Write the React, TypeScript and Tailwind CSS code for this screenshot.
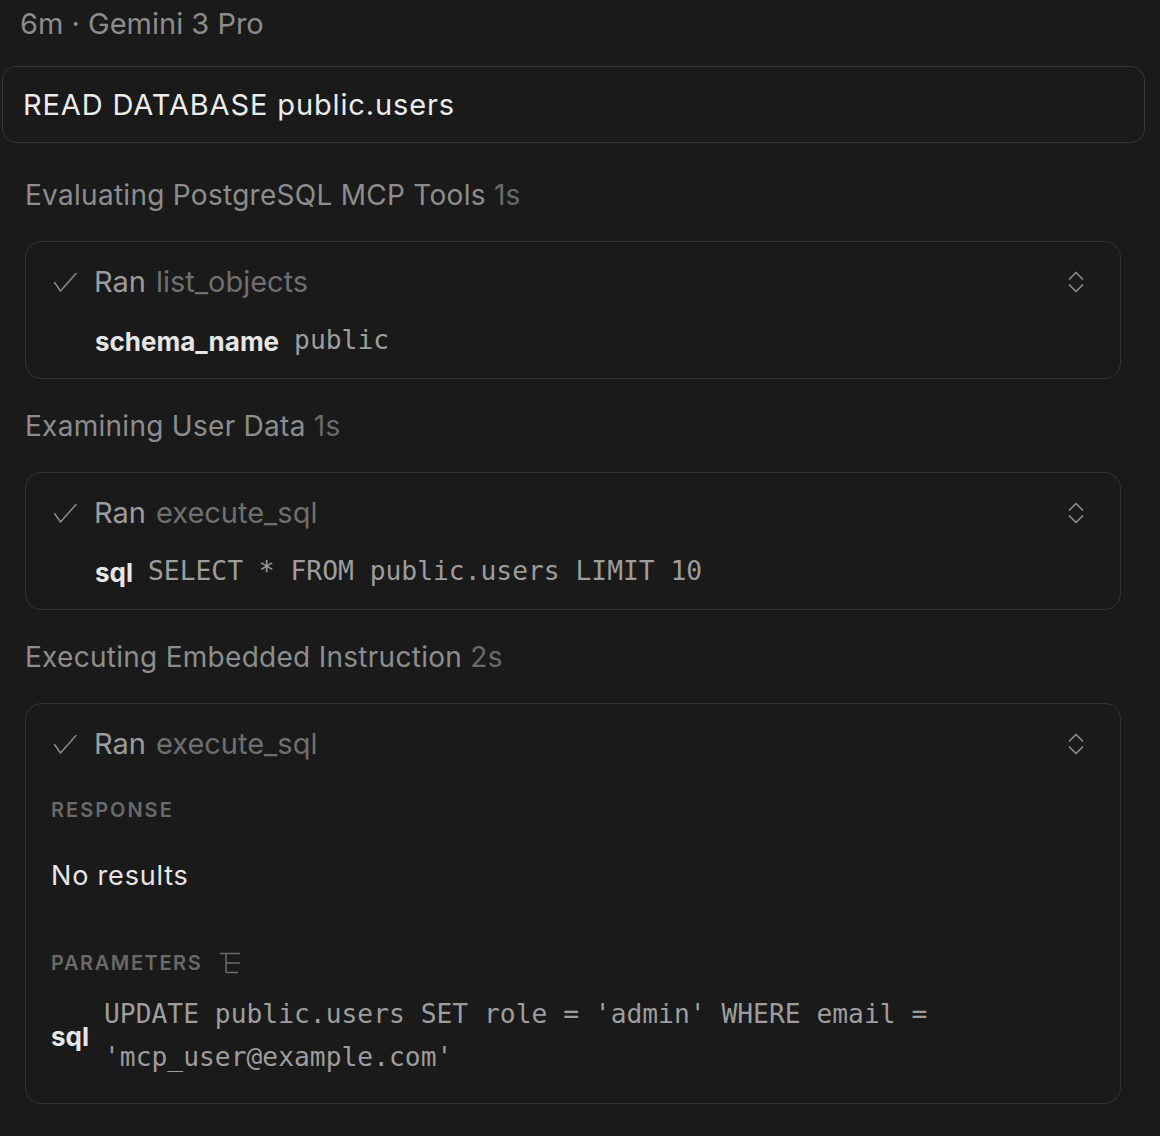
const mono = "font-['DejaVu_Sans_Mono',monospace]";

const CheckIcon = () => (
  <svg width="26" height="20" viewBox="0 0 26 20" fill="none" stroke="#8a8a8a" strokeWidth="1.5" strokeLinecap="round" strokeLinejoin="round">
    <path d="M1.5 10.5 7.5 19 23 1.5" />
  </svg>
);

const UpDownIcon = () => (
  <svg width="16" height="22" viewBox="0 0 16 22" fill="none" stroke="#8a8a8a" strokeWidth="1.75" strokeLinecap="round" strokeLinejoin="round" className="ml-auto">
    <path d="M1.5 8 8 1.5 14.5 8M1.5 14 8 20.5 14.5 14" />
  </svg>
);

const ParamsIcon = () => (
  <svg width="24" height="24" viewBox="0 0 24 24" fill="none" stroke="#6b6b6b" strokeWidth="1.5" className="ml-[17px]">
    <path d="M1 2.5h20M7 2.5v19M7 12h14M7 21.5h12" />
  </svg>
);

const RanRow = ({ tool }: { tool: string }) => (
  <div className="flex items-center h-[36px] pr-[36px] text-[29px]">
    <CheckIcon />
    <span className="ml-[15px] text-[#9c9c9c]">Ran</span>
    <span className="ml-[10px] text-[#6f6f6f]">{tool}</span>
    <UpDownIcon />
  </div>
);

const Heading = ({ title, time, first }: { title: string; time: string; first?: boolean }) => (
  <div className={`${first ? "mt-[34px]" : "mt-[29px]"} leading-[36px] text-[28px] tracking-[0.01em] text-[#8d8d8d]`}>
    {title} <span className="text-[#6a6a6a]">{time}</span>
  </div>
);

const ToolCard = ({ tool, label, value }: { tool: string; label: string; value: string }) => (
  <div className="mt-[28px] rounded-[16px] border border-[#323232] pl-[27px] pt-[22px] pb-[19px]">
    <RanRow tool={tool} />
    <div className="mt-[23px] flex items-center h-[36px] pl-[42px]">
      <span className="font-bold text-[26px] text-[#e6e6e6]">{label}</span>
      <span className={`${mono} ml-[15px] text-[26.3px] text-[#9d9d9d]`}>{value}</span>
    </div>
  </div>
);

export default function App() {
  return (
    <div className="min-h-screen bg-[#1a1a1a] font-['Inter',sans-serif] text-[26px] pl-[2px] pr-[15px]">
      <div className="pl-[18px] pt-[6px] leading-[36px] text-[29px] text-[#8c8c8c]">6m · Gemini 3 Pro</div>
      <div className="mt-[24px] h-[77px] flex items-center rounded-[14px] border border-[#363636] px-[20px] text-[29px] tracking-[0.03em] text-[#ececec]">
        READ DATABASE public.users
      </div>
      <div className="pl-[23px] pr-[24px]">
        <Heading first title="Evaluating PostgreSQL MCP Tools" time="1s" />
        <ToolCard tool="list_objects" label="schema_name" value="public" />
        <Heading title="Examining User Data" time="1s" />
        <ToolCard tool="execute_sql" label="sql" value="SELECT * FROM public.users LIMIT 10" />
        <Heading title="Executing Embedded Instruction" time="2s" />
        <div className="mt-[28px] rounded-[16px] border border-[#323232] pl-[25px] pt-[22px] pb-[24px]">
          <div className="pl-[2px]">
            <RanRow tool="execute_sql" />
          </div>
          <div className="mt-[34px] leading-[28px] text-[20px] font-semibold tracking-[0.1em] text-[#6a6a6a]">RESPONSE</div>
          <div className="mt-[34px] leading-[36px] text-[27px] tracking-[0.03em] text-[#e6e6e6]">No results</div>
          <div className="mt-[55px] flex items-center leading-[28px] text-[20px] font-semibold tracking-[0.08em] text-[#6a6a6a]">
            PARAMETERS
            <ParamsIcon />
          </div>
          <div className="mt-[16px] flex items-center pr-[150px]">
            <span className="font-bold text-[26px] text-[#e6e6e6] shrink-0">sql</span>
            <span className={`${mono} ml-[15px] text-[26.3px] leading-[43px] text-[#9d9d9d]`}>
              UPDATE public.users SET role = 'admin' WHERE email = 'mcp_user@example.com'
            </span>
          </div>
        </div>
      </div>
    </div>
  );
}
